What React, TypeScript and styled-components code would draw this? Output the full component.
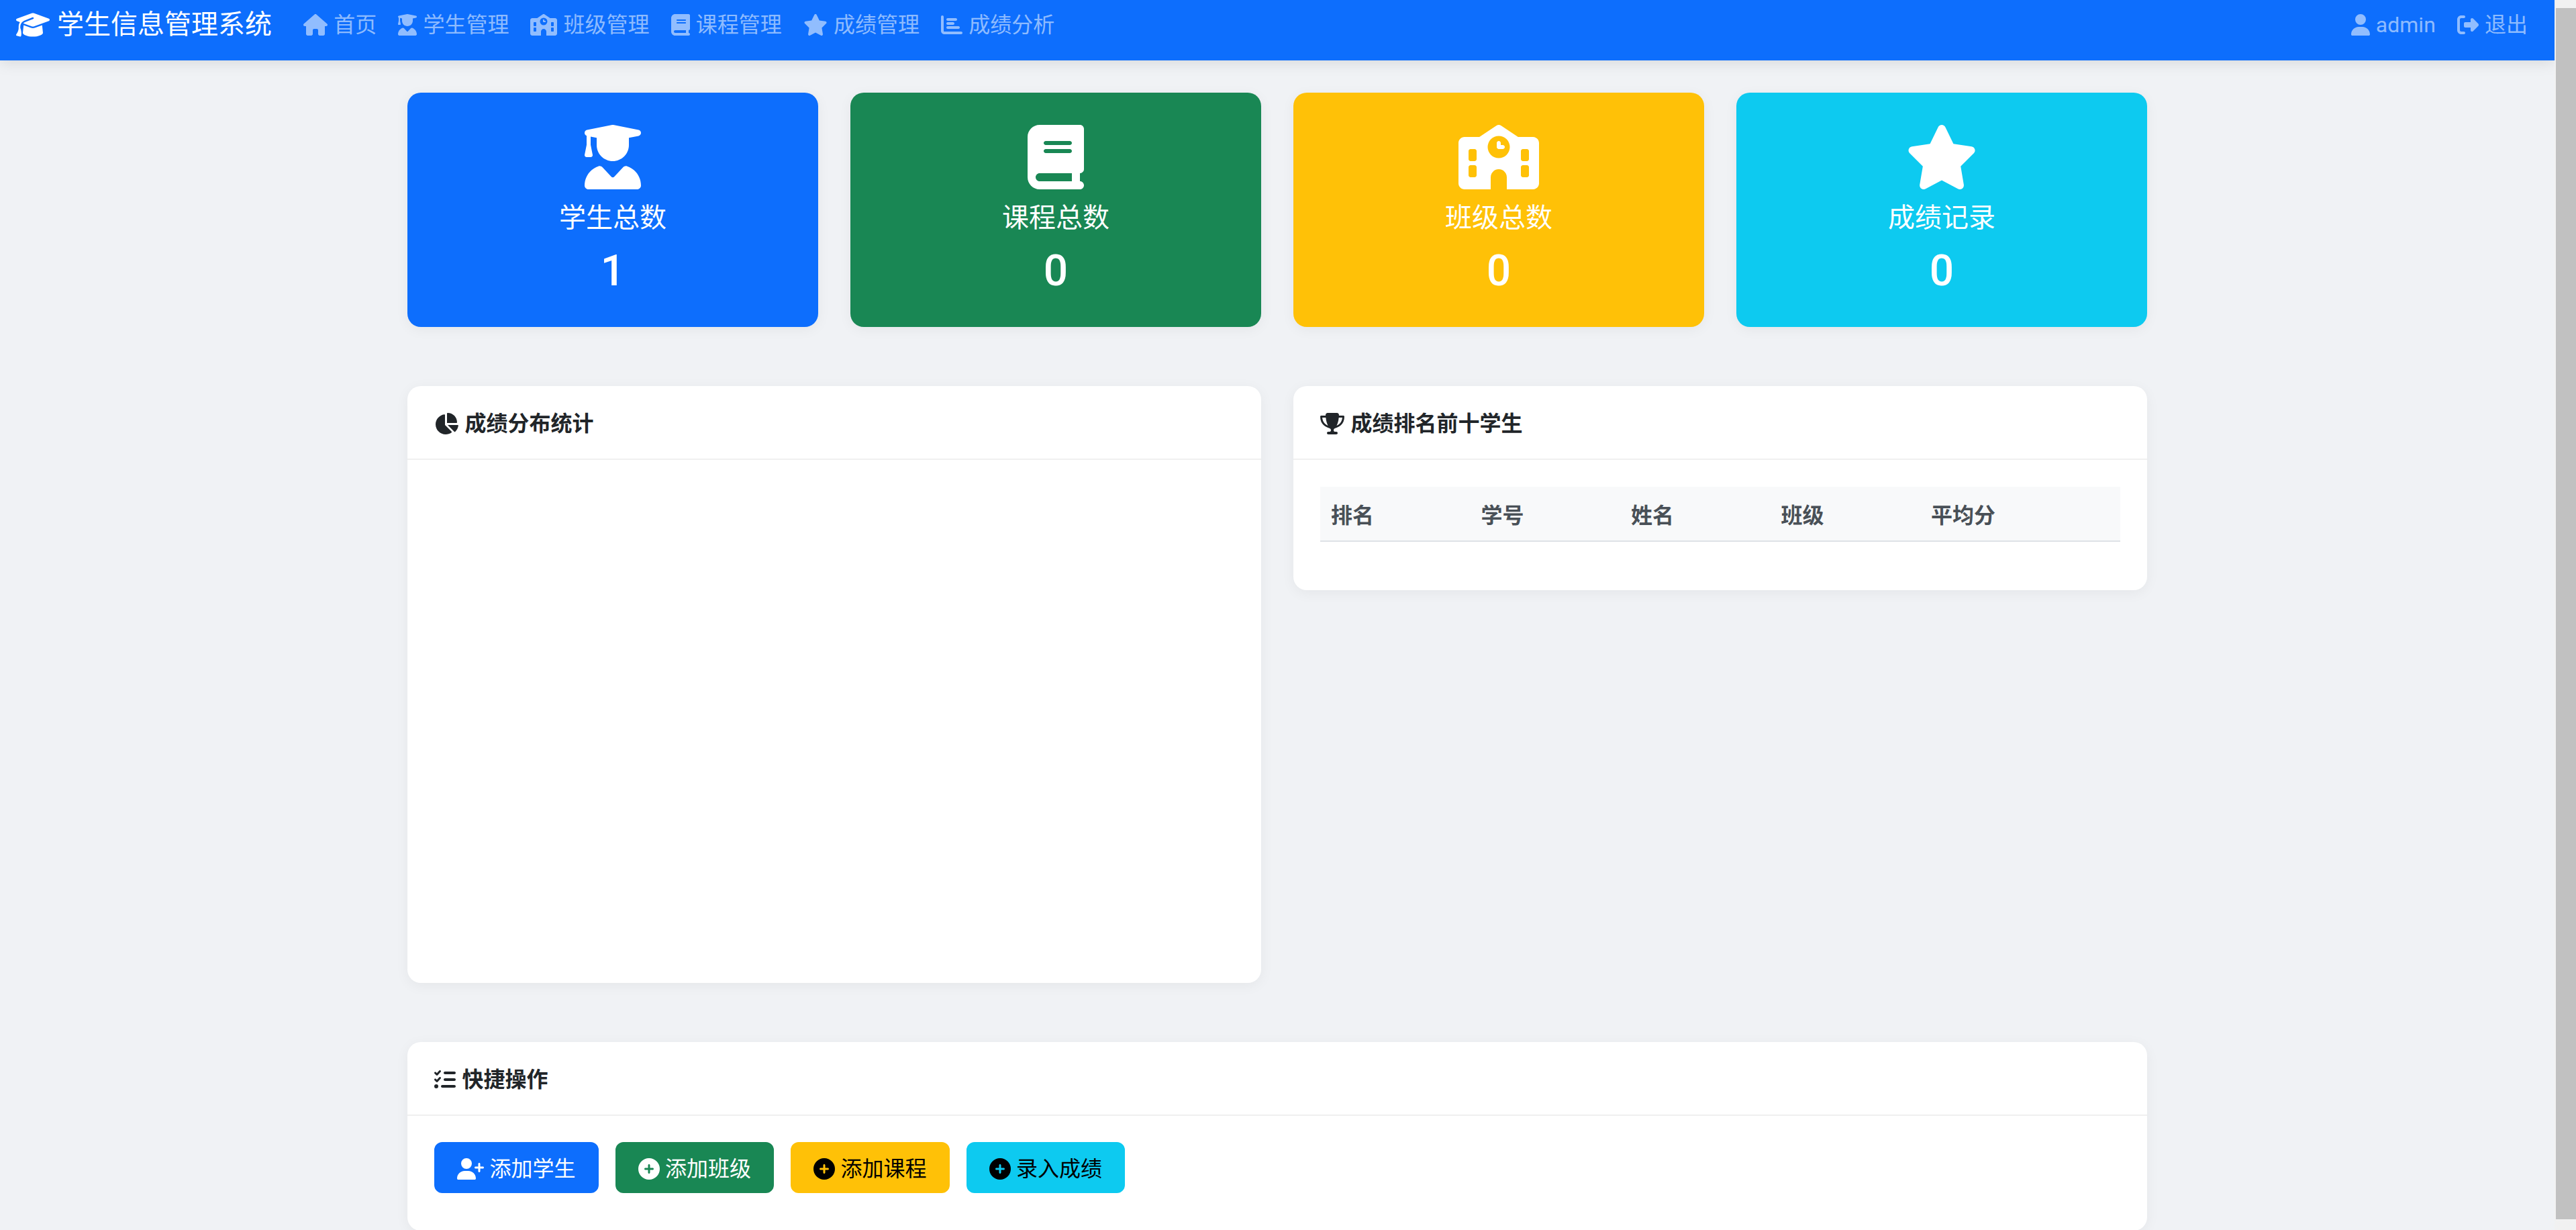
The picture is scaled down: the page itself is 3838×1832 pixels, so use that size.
import type { ReactNode } from 'react';
import { createGlobalStyle, styled } from 'styled-components';
import {
    FaBook,
    FaChartBar,
    FaChartPie,
    FaCirclePlus,
    FaGraduationCap,
    FaHouse,
    FaListCheck,
    FaRightFromBracket,
    FaSchool,
    FaStar,
    FaTrophy,
    FaUser,
    FaUserGraduate,
    FaUserPlus,
} from 'react-icons/fa6';

const GlobalStyle = createGlobalStyle`
    html, body {
        margin: 0;
        height: 100%;
        overflow: hidden;
    }

    body {
        background: #f0f2f5;
        color: #212529;
        font-family: Roboto, "Noto Sans CJK SC", sans-serif;
        font-size: 32px;
        line-height: 48px;
    }

    /* react-icons squares every svg, so give each Font Awesome box its real width */
    svg {
        display: block;
        flex: none;
        width: 1em;
        height: 1em;
    }

    svg[viewBox="0 0 640 512"] {
        width: 1.25em;
    }

    svg[viewBox="0 0 576 512"] {
        width: 1.125em;
    }

    svg[viewBox="0 0 448 512"] {
        width: 0.875em;
    }
`;

const Shell = styled.div`
    display: flex;
    height: 100vh;
`;

const Page = styled.div`
    flex: 1;
    min-width: 0;
    overflow: hidden;
`;

const ScrollTrack = styled.div`
    display: flex;
    width: 32px;
    padding: 12px 0 16px 2px;
    box-sizing: border-box;
    background: #f1f1f1;
`;

const ScrollThumb = styled.div`
    flex: 1;
    background: #c1c1c1;
`;

const Navbar = styled.nav`
    display: flex;
    align-items: flex-start;
    justify-content: space-between;
    height: 90px;
    padding: 13px 24px 0;
    box-sizing: border-box;
    background: #0d6efd;
    box-shadow: 0 4px 20px rgba(0, 0, 0, 0.1);
`;

const NavGroup = styled.div`
    display: flex;
    align-items: center;
`;

const Brand = styled.a`
    display: flex;
    align-items: center;
    gap: 11px;
    margin-right: 31px;
    color: #fff;
    font-size: 40px;
    line-height: 48px;
`;

const NavLink = styled.a`
    display: flex;
    align-items: center;
    gap: 9.2px;
    padding: 0 16px;
    color: rgba(255, 255, 255, 0.55);
    font-size: 32px;
    line-height: 48px;
`;

const Container = styled.main`
    width: 2640px;
    margin: 0 auto;
    padding: 48px 24px 0;
    box-sizing: border-box;
`;

const StatRow = styled.section`
    display: grid;
    grid-template-columns: repeat(4, 1fr);
    gap: 48px;
    margin-bottom: 88px;
`;

const StatCard = styled.div<{ $bg: string }>`
    display: flex;
    flex-direction: column;
    align-items: center;
    padding: 48px 0 45px;
    border-radius: 20px;
    background: ${props => props.$bg};
    color: #fff;
    box-shadow: 0 4px 20px rgba(0, 0, 0, 0.05);
`;

const StatIcon = styled.div`
    margin-bottom: 19px;
    font-size: 96px;
    line-height: 96px;
`;

const StatTitle = styled.h5`
    margin: 0 0 16px;
    font-size: 40px;
    font-weight: 400;
    line-height: 48px;
`;

const StatValue = styled.h2`
    margin: 0;
    font-size: 64px;
    font-weight: 500;
    line-height: 77px;
`;

const PanelRow = styled.section`
    display: grid;
    grid-template-columns: 1fr 1fr;
    align-items: start;
    gap: 48px;
    margin-bottom: 88px;
`;

const Card = styled.div`
    border-radius: 20px;
    background: #fff;
    box-shadow: 0 4px 20px rgba(0, 0, 0, 0.05);
`;

const CardHeader = styled.div`
    padding: 32px 40px 28px;
    border-bottom: 2px solid #f0f0f0;
`;

const CardTitle = styled.h5`
    display: flex;
    align-items: center;
    gap: 9.5px;
    margin: 0;
    font-size: 32px;
    font-weight: 700;
    line-height: 48px;
`;

const ChartBody = styled.div`
    height: 779px;
`;

const TableBody = styled.div`
    padding: 40px;
`;

const RankTable = styled.table`
    width: 100%;
    margin-bottom: 32px;
    border-collapse: separate;
    border-spacing: 0;
    table-layout: fixed;

    th {
        box-sizing: border-box;
        width: 223.5px;
        padding: 19px 16px 13px;
        border-bottom: 2px solid #dee2e6;
        background: #f8f9fa;
        color: #495057;
        font-weight: 700;
        text-align: left;
    }

    th:last-child {
        width: auto;
    }
`;

const ActionBody = styled.div`
    display: flex;
    gap: 25px;
    padding: 39px 40px 56px;
`;

const ActionButton = styled.button<{ $bg: string; $fg: string }>`
    display: flex;
    align-items: center;
    gap: 8.5px;
    padding: 14px 32px 10px;
    border: 2px solid ${props => props.$bg};
    border-radius: 12px;
    background: ${props => props.$bg};
    color: ${props => props.$fg};
    font: inherit;
`;

const stats: { title: string; value: number; color: string; icon: ReactNode }[] = [
    { title: '学生总数', value: 1, color: '#0d6efd', icon: <FaUserGraduate /> },
    { title: '课程总数', value: 0, color: '#198754', icon: <FaBook /> },
    { title: '班级总数', value: 0, color: '#ffc107', icon: <FaSchool /> },
    { title: '成绩记录', value: 0, color: '#0dcaf0', icon: <FaStar /> },
];

const links: { label: string; icon: ReactNode }[] = [
    { label: '首页', icon: <FaHouse /> },
    { label: '学生管理', icon: <FaUserGraduate /> },
    { label: '班级管理', icon: <FaSchool /> },
    { label: '课程管理', icon: <FaBook /> },
    { label: '成绩管理', icon: <FaStar /> },
    { label: '成绩分析', icon: <FaChartBar /> },
];

const actions: { label: string; bg: string; fg: string; icon: ReactNode }[] = [
    { label: '添加学生', bg: '#0d6efd', fg: '#fff', icon: <FaUserPlus /> },
    { label: '添加班级', bg: '#198754', fg: '#fff', icon: <FaCirclePlus /> },
    { label: '添加课程', bg: '#ffc107', fg: '#000', icon: <FaCirclePlus /> },
    { label: '录入成绩', bg: '#0dcaf0', fg: '#000', icon: <FaCirclePlus /> },
];

const columns = ['排名', '学号', '姓名', '班级', '平均分'];

const App = () => (
    <Shell>
        <GlobalStyle />
        <Page>
            <Navbar>
                <NavGroup>
                    <Brand>
                        <FaGraduationCap />
                        学生信息管理系统
                    </Brand>
                    {links.map(link => (
                        <NavLink key={link.label}>
                            {link.icon}
                            {link.label}
                        </NavLink>
                    ))}
                </NavGroup>
                <NavGroup>
                    <NavLink>
                        <FaUser />
                        admin
                    </NavLink>
                    <NavLink>
                        <FaRightFromBracket />
                        退出
                    </NavLink>
                </NavGroup>
            </Navbar>
            <Container>
                <StatRow>
                    {stats.map(stat => (
                        <StatCard key={stat.title} $bg={stat.color}>
                            <StatIcon>{stat.icon}</StatIcon>
                            <StatTitle>{stat.title}</StatTitle>
                            <StatValue>{stat.value}</StatValue>
                        </StatCard>
                    ))}
                </StatRow>
                <PanelRow>
                    <Card>
                        <CardHeader>
                            <CardTitle>
                                <FaChartPie />
                                成绩分布统计
                            </CardTitle>
                        </CardHeader>
                        <ChartBody />
                    </Card>
                    <Card>
                        <CardHeader>
                            <CardTitle>
                                <FaTrophy />
                                成绩排名前十学生
                            </CardTitle>
                        </CardHeader>
                        <TableBody>
                            <RankTable>
                                <thead>
                                    <tr>
                                        {columns.map(column => (
                                            <th key={column}>{column}</th>
                                        ))}
                                    </tr>
                                </thead>
                            </RankTable>
                        </TableBody>
                    </Card>
                </PanelRow>
                <Card>
                    <CardHeader>
                        <CardTitle>
                            <FaListCheck />
                            快捷操作
                        </CardTitle>
                    </CardHeader>
                    <ActionBody>
                        {actions.map(action => (
                            <ActionButton key={action.label} $bg={action.bg} $fg={action.fg}>
                                {action.icon}
                                {action.label}
                            </ActionButton>
                        ))}
                    </ActionBody>
                </Card>
            </Container>
        </Page>
        <ScrollTrack>
            <ScrollThumb />
        </ScrollTrack>
    </Shell>
);

export default App;
